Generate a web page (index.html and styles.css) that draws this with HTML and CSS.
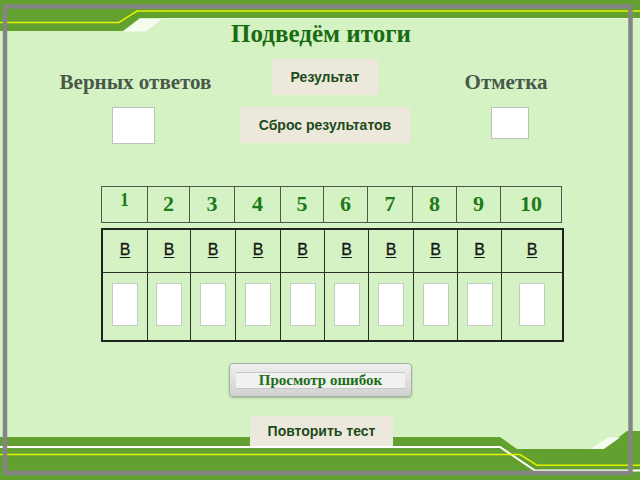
FILE: index.html
```html
<!DOCTYPE html>
<html lang="ru">
<head>
<meta charset="utf-8">
<title>Подведём итоги</title>
<link rel="stylesheet" href="styles.css">
</head>
<body>
<div class="screen">
  <svg class="deco" width="640" height="480" viewBox="0 0 640 480" aria-hidden="true">
    <polygon points="0,0 640,0 640,18 140,18 123,31 0,31" fill="#62a030"/>
    <polygon points="140,19 162,19 146,31.5 123,31.5" fill="#f4fbef"/>
    <polyline points="0,22.5 119,22.5 137,11 640,11" fill="none" stroke="#e4f000" stroke-width="1.5"/>
    <line x1="162" y1="18.5" x2="640" y2="18.5" stroke="#e6f6dc" stroke-width="1"/>
    <polygon points="0,437 500,437 517,449 603,449 627,431 640,431 640,480 0,480" fill="#62a030"/>
    <polygon points="590,449 604,449 620,437.5 608,437.5" fill="#f4fbef"/>
    <polyline points="0,447 500,447 535,470.5 640,470.5" fill="none" stroke="#ffffff" stroke-width="2"/>
    <polyline points="0,454.5 520,454.5 537,465.2 640,465.2" fill="none" stroke="#e4f000" stroke-width="1.5"/>
    <rect x="5" y="6.5" width="625.5" height="466.5" fill="none" stroke="#858585" stroke-width="4.5"/>
  </svg>
  <div class="content">
    <h1 class="title">Подведём итоги</h1>
    <div class="summary">
      <div class="label label-left">Верных ответов</div>
      <button class="btn btn-result">Результат</button>
      <div class="label label-right">Отметка</div>
      <div class="box box-left"></div>
      <button class="btn btn-reset">Сброс результатов</button>
      <div class="box box-right"></div>
    </div>
    <div class="nums">
      <div class="num num-first">1</div>
      <div class="num">2</div>
      <div class="num">3</div>
      <div class="num">4</div>
      <div class="num">5</div>
      <div class="num">6</div>
      <div class="num">7</div>
      <div class="num">8</div>
      <div class="num">9</div>
      <div class="num">10</div>
    </div>
    <div class="answers">
      <div class="ans-head"><u>В</u></div>
      <div class="ans-head"><u>В</u></div>
      <div class="ans-head"><u>В</u></div>
      <div class="ans-head"><u>В</u></div>
      <div class="ans-head"><u>В</u></div>
      <div class="ans-head"><u>В</u></div>
      <div class="ans-head"><u>В</u></div>
      <div class="ans-head"><u>В</u></div>
      <div class="ans-head"><u>В</u></div>
      <div class="ans-head"><u>В</u></div>
      <div class="ans-cell"><span class="slot"></span></div>
      <div class="ans-cell"><span class="slot"></span></div>
      <div class="ans-cell"><span class="slot"></span></div>
      <div class="ans-cell"><span class="slot"></span></div>
      <div class="ans-cell"><span class="slot"></span></div>
      <div class="ans-cell"><span class="slot"></span></div>
      <div class="ans-cell"><span class="slot"></span></div>
      <div class="ans-cell"><span class="slot"></span></div>
      <div class="ans-cell"><span class="slot"></span></div>
      <div class="ans-cell"><span class="slot"></span></div>
    </div>
    <button class="review"><span class="review-inner">Просмотр ошибок</span></button>
    <button class="btn btn-retry">Повторить тест</button>
  </div>
</div>
</body>
</html>
```

FILE: styles.css
```css
html, body {
  margin: 0;
  padding: 0;
}

.screen {
  position: relative;
  width: 640px;
  height: 480px;
  overflow: hidden;
  background: #d5f2c5;
  font-family: "Liberation Serif", "Times New Roman", serif;
}

.deco {
  position: absolute;
  left: 0;
  top: 0;
}

.content {
  position: relative;
  display: flex;
  flex-direction: column;
  align-items: center;
  height: 100%;
}

.title {
  margin: 20px 0 0 2px;
  font-size: 25px;
  line-height: 28px;
  font-weight: bold;
  color: #1b6b12;
}

.summary {
  align-self: flex-start;
  margin: 11px 0 0 40px;
  display: grid;
  grid-template-columns: 190px 190px 172px;
  grid-template-rows: 36px 37px;
  row-gap: 12px;
}

.label {
  align-self: start;
  justify-self: center;
  margin-top: 11px;
  font-size: 21px;
  line-height: 24px;
  font-weight: bold;
  color: #4a584a;
}

.label-left {
  margin-left: 1px;
}

.btn {
  margin: 0;
  border: none;
  padding: 0;
  background: #ece9dc;
  font-family: "Liberation Sans", Arial, sans-serif;
  font-weight: bold;
  font-size: 14px;
  color: #1d4a1a;
  text-align: center;
}

.btn-result {
  justify-self: center;
  width: 106px;
  height: 36px;
}

.btn-reset {
  justify-self: center;
  width: 170px;
  height: 36px;
}

.box {
  justify-self: start;
  box-sizing: border-box;
  background: #ffffff;
  border: 1px solid #b8c4b4;
}

.box-left {
  margin-left: 72px;
  width: 43px;
  height: 37px;
}

.box-right {
  margin-left: 71px;
  width: 38px;
  height: 32px;
}

.nums {
  align-self: flex-start;
  margin: 42px 0 0 101px;
  display: grid;
  grid-template-columns: 46px 42px 45px 46px 43px 44px 45px 44px 44px 61px;
  grid-template-rows: 36px;
  box-sizing: border-box;
  border-top: 1px solid #4f5a4f;
  border-left: 1px solid #4f5a4f;
}

.num {
  box-sizing: border-box;
  border-right: 1px solid #4f5a4f;
  border-bottom: 1px solid #4f5a4f;
  display: flex;
  align-items: center;
  justify-content: center;
  font-size: 22px;
  font-weight: bold;
  color: #1d7a18;
  padding-bottom: 1px;
}

.num-first {
  font-size: 18px;
  padding-bottom: 8px;
}

.answers {
  align-self: flex-start;
  margin: 5px 0 0 101px;
  display: grid;
  grid-template-columns: 45px 43px 45px 45px 44px 44px 45px 44px 44px 60px;
  grid-template-rows: 43px 67px;
  box-sizing: border-box;
  border: 2px solid #1f241f;
}

.ans-head,
.ans-cell {
  box-sizing: border-box;
  border-right: 1.5px solid #2a302a;
  display: flex;
  justify-content: center;
}

.ans-head:nth-child(10),
.ans-cell:nth-child(20) {
  border-right: none;
}

.ans-head {
  border-bottom: 1.5px solid #2a302a;
  align-items: center;
  padding-bottom: 2px;
  font-family: "Liberation Sans", Arial, sans-serif;
  font-size: 16px;
  color: #151815;
  -webkit-text-stroke: 0.3px #151815;
}

.ans-head u {
  text-underline-offset: 2px;
}

.ans-cell {
  align-items: flex-start;
  padding-top: 10px;
}

.slot {
  display: block;
  box-sizing: border-box;
  width: 26px;
  height: 43px;
  background: #ffffff;
  border: 1px solid #c4cbc0;
}

.review {
  margin: 21px 0 0 1px;
  width: 183px;
  height: 34px;
  padding: 0 6px;
  box-sizing: border-box;
  border: 1px solid #aab0a8;
  border-radius: 4px;
  background: linear-gradient(#eeeeee, #d0d2d0);
  box-shadow: 0 1px 2px rgba(0, 0, 0, 0.25);
  display: flex;
  align-items: center;
}

.review-inner {
  flex: 1;
  height: 15px;
  border-top: 1px solid #c4c8c4;
  border-bottom: 1px solid #c4c8c4;
  background: #f1f2ef;
  font-family: "Liberation Serif", "Times New Roman", serif;
  font-weight: bold;
  font-size: 15px;
  line-height: 15px;
  color: #1d6e18;
  text-align: center;
}

.btn-retry {
  margin: 19px 0 0 3px;
  width: 143px;
  height: 30px;
}
```
